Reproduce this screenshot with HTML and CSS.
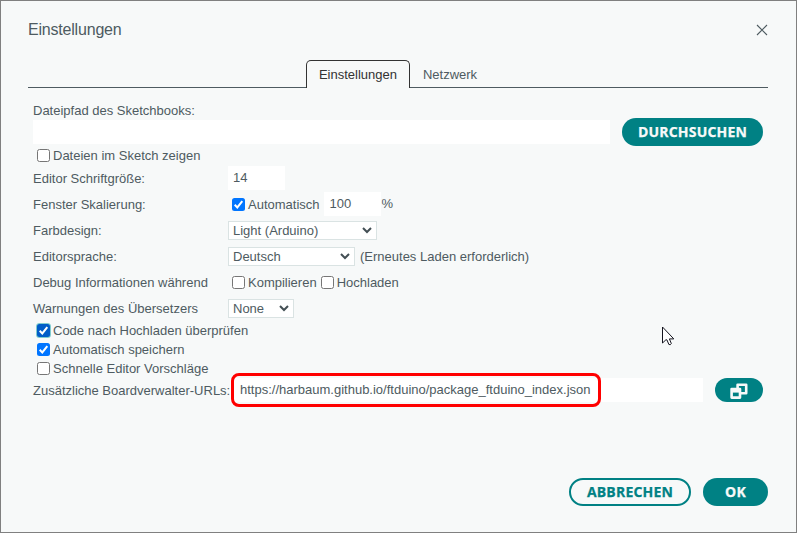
FILE: index.html
```html
<!DOCTYPE html>
<html lang="de">
<head>
<meta charset="utf-8">
<title>Einstellungen</title>
<link rel="stylesheet" href="styles.css">
</head>
<body>
<svg class="defs" width="0" height="0">
  <symbol id="tick" viewBox="0 0 13 13"><path d="M2.7 6.8l2.6 2.6 5-6.2" fill="none" stroke="#fff" stroke-width="2"/></symbol>
  <symbol id="chevron" viewBox="0 0 10 7"><path d="M1 1l4 4 4-4" fill="none" stroke="#434f54" stroke-width="2"/></symbol>
</svg>
<main class="dialog">
  <header class="titlebar">
    <h1>Einstellungen</h1>
    <svg class="close" width="12" height="12" viewBox="0 0 12 12"><path d="M1 1l10 10M11 1L1 11" stroke="#4e5b61" stroke-width="1.1"/></svg>
  </header>
  <nav class="tabs">
    <div class="tab active">Einstellungen</div>
    <div class="tab">Netzwerk</div>
  </nav>
  <section class="content">
    <div class="path-label"><span>Dateipfad des Sketchbooks:</span></div>
    <div class="path-row">
      <div class="field"></div>
      <button class="button browse">DURCHSUCHEN</button>
    </div>
    <div class="check-row first"><i class="box"></i><span>Dateien im Sketch zeigen</span></div>
    <div class="row"><span class="label">Editor Schriftgröße:</span><div class="field small">14</div></div>
    <div class="row"><span class="label">Fenster Skalierung:</span><i class="box on"><svg><use href="#tick"/></svg></i><span>Automatisch</span><div class="field small scale">100</div><span class="percent">%</span></div>
    <div class="row"><span class="label">Farbdesign:</span><div class="select theme"><span>Light (Arduino)</span><svg><use href="#chevron"/></svg></div></div>
    <div class="row"><span class="label">Editorsprache:</span><div class="select lang"><span>Deutsch</span><svg><use href="#chevron"/></svg></div><span class="note">(Erneutes Laden erforderlich)</span></div>
    <div class="row"><span class="label">Debug Informationen während</span><i class="box"></i><span>Kompilieren</span><i class="box second"></i><span>Hochladen</span></div>
    <div class="row"><span class="label">Warnungen des Übersetzers</span><div class="select warn"><span>None</span><svg><use href="#chevron"/></svg></div></div>
    <div class="check-row"><i class="box on focus"><svg><use href="#tick"/></svg></i><span>Code nach Hochladen überprüfen</span></div>
    <div class="check-row"><i class="box on"><svg><use href="#tick"/></svg></i><span>Automatisch speichern</span></div>
    <div class="check-row"><i class="box"></i><span>Schnelle Editor Vorschläge</span></div>
    <div class="url-row">
      <span class="url-label">Zusätzliche Boardverwalter-URLs:</span>
      <div class="field url"><span>https://harbaum.github.io/ftduino/package_ftduino_index.json</span><div class="marker"></div></div>
      <button class="button windows"><svg width="18" height="16" viewBox="0 0 18 16"><g fill="none" stroke="#f7f9f9" stroke-width="2.6" stroke-linejoin="round"><rect x="7.6" y="1.8" width="8.6" height="8.4"/><rect x="1.6" y="6" width="8.4" height="8.6" fill="#008184"/></g><path d="M1.6 6.4h8.4v3.2H1.6z" fill="#f7f9f9"/></svg></button>
    </div>
  </section>
  <footer>
    <button class="button outline">ABBRECHEN</button>
    <button class="button ok">OK</button>
  </footer>
  <svg class="cursor" width="14" height="20" viewBox="0 0 14 20"><path d="M1.5 1v16l3.4-3.2h1l2 4.7q1.8.8 2.4-1L8.400 12.900h4.4z" fill="#fff" stroke="#15151f" stroke-width="1"/></svg>
</main>
</body>
</html>
```
FILE: styles.css
```css
* { box-sizing: border-box; }
body { margin: 0; font: 13px/15px "Liberation Sans", Arial, sans-serif; color: #4e5b61; }
.defs { position: absolute; }
.dialog { position: relative; width: 797px; height: 533px; padding: 19px 28px 26px 27px; display: flex; flex-direction: column; background: #f7f9f9; border: 1px solid #808080; white-space: nowrap; }
.titlebar { display: flex; justify-content: space-between; align-items: center; height: 20px; }
h1 { margin: 0; font-size: 16px; line-height: 20px; font-weight: 400; letter-spacing: -.2px; }
.close { display: block; }
.tabs { display: flex; justify-content: center; height: 28px; margin-top: 20px; border-bottom: 1px solid #4e5b61; padding-right: 1px; }
.tab { height: 28px; padding: 7px 12px 0 13px; }
.tab.active { background: #f7f9f9; color: #333; border: 1px solid #333; border-bottom: 0; border-radius: 5px 5px 0 0; padding: 6px 12px 0; }
.content { padding: 15px 5px 0; }
.path-label { height: 17px; line-height: 15px; }
.path-row { height: 24px; display: flex; align-items: center; gap: 12px; }
.field { height: 24px; flex: 1; background: #fff; padding: 4px 5px; line-height: 15px; }
.field.small { flex: none; width: 57px; }
.field.scale { margin-left: 4px; padding-left: 6px; }
.percent { align-self: flex-start; padding: 5px 0 0 1px; }
.button { flex: none; display: flex; align-items: center; justify-content: center; border: 0; height: 28px; border-radius: 14px; padding: 0; background: #008184; color: #f7f9f9; font: 700 14px/20px "Open Sans", sans-serif; letter-spacing: .2px; -webkit-text-stroke: .25px; }
.browse { width: 141px; }
.check-row { height: 19px; display: flex; align-items: center; }
.check-row.first { height: 21px; padding-top: 2px; }
.check-row .box { margin-left: 4px; }
.box { flex: none; width: 13px; height: 13px; margin: 0 3px 0 4px; border: 1px solid #767676; border-radius: 2.5px; background: #fff; }
.box.on { border: 0; background: #0075ff; }
.box.on svg { display: block; width: 13px; height: 13px; }
.box.focus { background: #005cc8; box-shadow: 0 0 0 1px #7fcbcd; }
.box.second { margin-left: 4px; }
.row { height: 26px; display: flex; align-items: center; }
.label { width: 195px; flex: none; }
.select { height: 19px; background: #fff; border: 1px solid #dae3e3; padding: 0 4px; display: flex; justify-content: space-between; align-items: center; }
.select svg { width: 10px; height: 7px; }
.theme { width: 149px; }
.lang { width: 127px; }
.warn { width: 66px; }
.note { margin-left: 5px; }
.url-row { display: flex; align-items: center; height: 24px; }
.url-label { width: 197px; flex: none; }
.field.url { position: relative; padding-left: 10px; }
.marker { position: absolute; left: 1px; top: -5px; width: 370px; height: 34px; border: 3px solid #f00; border-radius: 8px; }
.windows { width: 48px; height: 24px; border-radius: 12px; margin-left: 12px; }
.windows svg { position: relative; top: 1px; }
footer { margin-top: auto; display: flex; justify-content: flex-end; gap: 12px; }
.outline { width: 122px; background: transparent; border: 2px solid #008184; color: #008184; }
.ok { width: 65px; }
.cursor { position: absolute; left: 660px; top: 325px; }
```
